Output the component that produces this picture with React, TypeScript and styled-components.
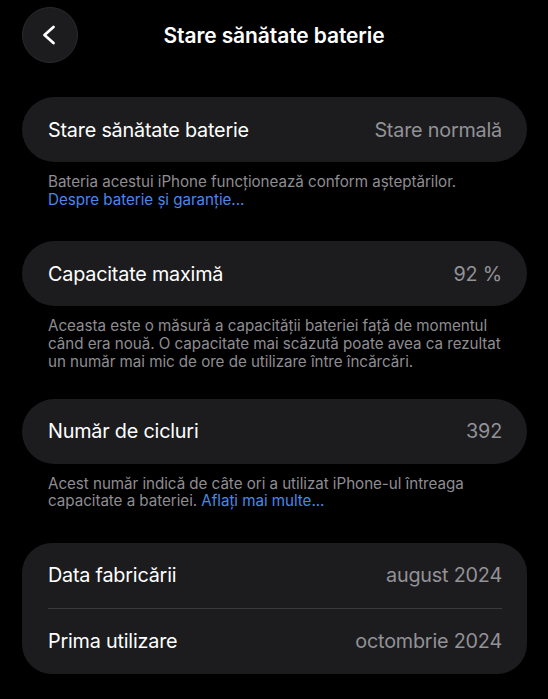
import React from "react";
import styled, { createGlobalStyle } from "styled-components";

const Global = createGlobalStyle`
  html, body { margin: 0; padding: 0; background: #000; }
  body { font-family: Inter, "Noto Sans", "Liberation Sans", sans-serif; -webkit-font-smoothing: antialiased; }
  * { box-sizing: border-box; }
`;

const Screen = styled.div`
  width: 548px;
  height: 699px;
  background: #000;
  color: #fff;
  overflow: hidden;
  display: flex;
  flex-direction: column;
`;

const NavBar = styled.header`
  height: 70px;
  display: grid;
  grid-template-columns: 56px 1fr 56px;
  align-items: center;
  padding: 7px 22px 7px 22px;
`;

const BackButton = styled.button`
  width: 56px;
  height: 56px;
  border-radius: 50%;
  background: #1c1c1e;
  border: 1px solid #2a2a2c;
  display: flex;
  align-items: center;
  justify-content: center;
  padding: 0 3px 0 0;
  color: #fff;
`;

const Title = styled.h1`
  margin: 0;
  text-align: center;
  font-size: 21px;
  font-weight: 600;
  letter-spacing: -0.1px;
`;

const Content = styled.main`
  display: flex;
  flex-direction: column;
  padding: 27px 21px 0 22px;
`;

const Section = styled.section<{ $gap: number }>`
  display: flex;
  flex-direction: column;
  margin-bottom: ${(p) => p.$gap}px;
`;

const Card = styled.div<{ $pill?: boolean }>`
  background: #1c1c1e;
  border-radius: ${(p) => (p.$pill ? "33px" : "30px")};
  display: flex;
  flex-direction: column;
  padding: 0 25px 0 26px;
`;

const Row = styled.div`
  height: 65px;
  display: flex;
  align-items: center;
  justify-content: space-between;
  font-size: 19.8px;
  letter-spacing: -0.2px;
`;

const Label = styled.span`
  color: #fff;
`;

const Value = styled.span`
  color: #929297;
`;

const Divider = styled.div`
  height: 1px;
  background: #3a3a3c;
`;

const Footer = styled.p`
  margin: 0;
  padding: 11px 20px 0 26px;
  font-size: 15.2px;
  line-height: 17.7px;
  color: #8d8d92;
  letter-spacing: -0.05px;
  white-space: nowrap;
`;

const Link = styled.span`
  color: #4a87ec;
`;

const Chevron = () => (
  <svg width="16" height="22" viewBox="0 0 16 22" fill="none">
    <path d="M12.5 3 L3.5 11 L12.5 19" stroke="#fff" strokeWidth="2.8" strokeLinecap="round" strokeLinejoin="round" />
  </svg>
);

export default function App() {
  return (
    <>
      <Global />
      <Screen>
        <NavBar>
          <BackButton aria-label="Înapoi">
            <Chevron />
          </BackButton>
          <Title>Stare sănătate baterie</Title>
          <span />
        </NavBar>
        <Content>
          <Section $gap={33}>
            <Card $pill>
              <Row>
                <Label>Stare sănătate baterie</Label>
                <Value>Stare normală</Value>
              </Row>
            </Card>
            <Footer>
              Bateria acestui iPhone funcționează conform așteptărilor.
              <br />
              <Link>Despre baterie și garanție...</Link>
            </Footer>
          </Section>
          <Section $gap={28}>
            <Card $pill>
              <Row>
                <Label>Capacitate maximă</Label>
                <Value>92 %</Value>
              </Row>
            </Card>
            <Footer>
              Aceasta este o măsură a capacității bateriei față de momentul
              <br />
              când era nouă. O capacitate mai scăzută poate avea ca rezultat
              <br />
              un număr mai mic de ore de utilizare între încărcări.
            </Footer>
          </Section>
          <Section $gap={33}>
            <Card $pill>
              <Row>
                <Label>Număr de cicluri</Label>
                <Value>392</Value>
              </Row>
            </Card>
            <Footer>
              Acest număr indică de câte ori a utilizat iPhone-ul întreaga
              <br />
              capacitate a bateriei. <Link>Aflați mai multe...</Link>
            </Footer>
          </Section>
          <Section $gap={0}>
            <Card>
              <Row>
                <Label>Data fabricării</Label>
                <Value>august 2024</Value>
              </Row>
              <Divider />
              <Row>
                <Label>Prima utilizare</Label>
                <Value>octombrie 2024</Value>
              </Row>
            </Card>
          </Section>
        </Content>
      </Screen>
    </>
  );
}
